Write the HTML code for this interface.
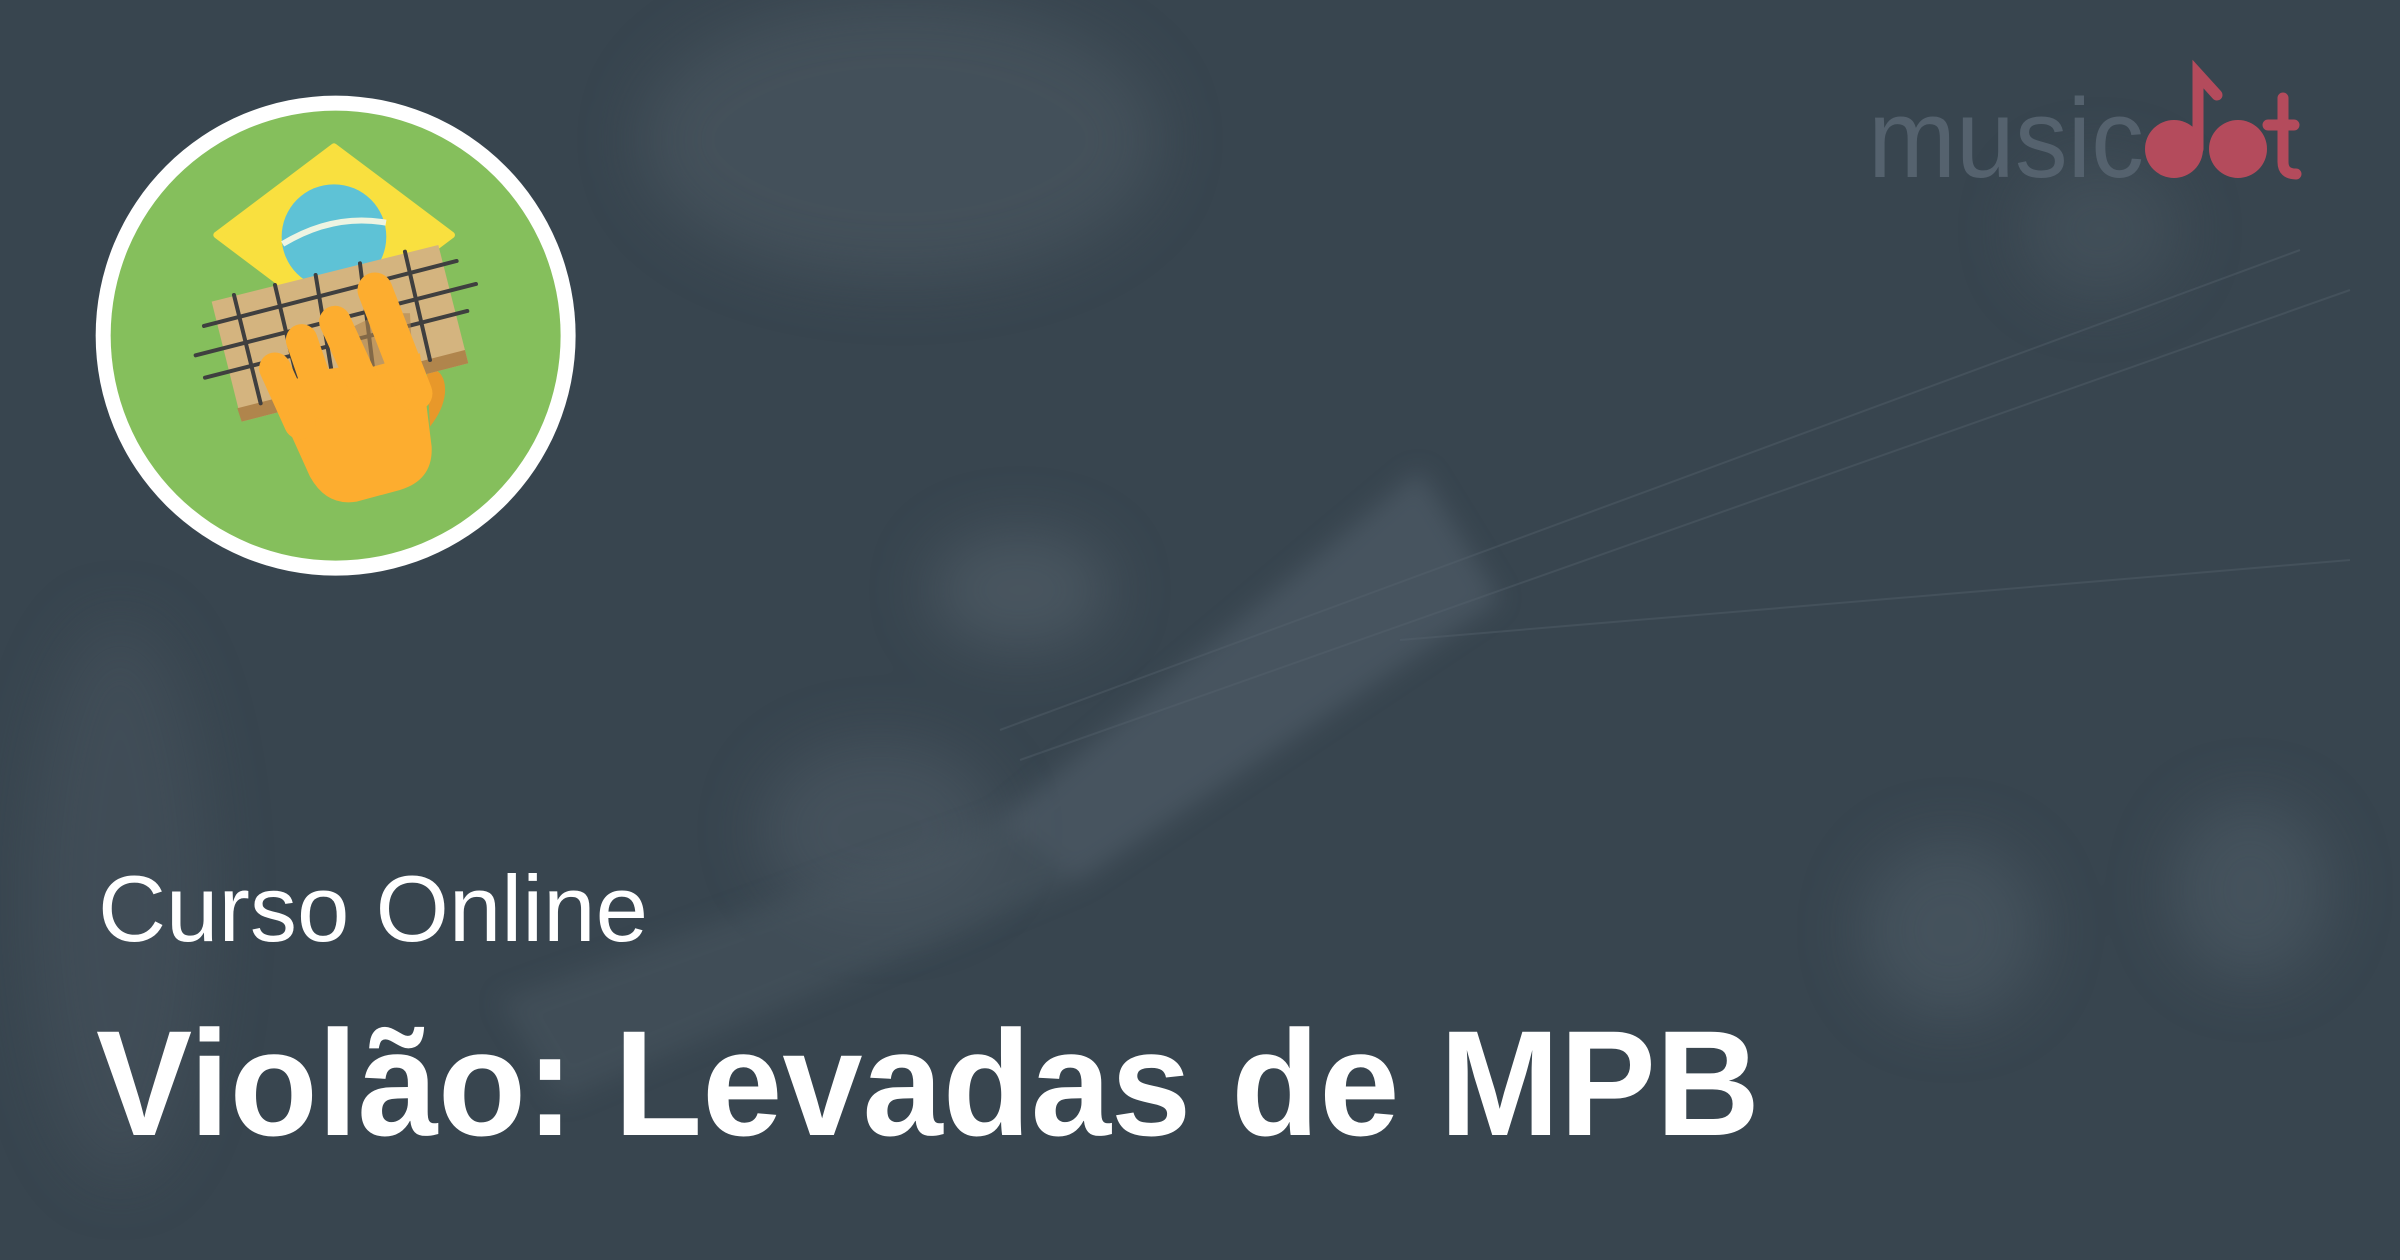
<!DOCTYPE html>
<html><head><meta charset="utf-8"><style>
html,body{margin:0;padding:0;width:2400px;height:1260px;overflow:hidden;background:#38454f}
svg{display:block}
</style></head><body>
<svg width="2400" height="1260" viewBox="0 0 2400 1260" xmlns="http://www.w3.org/2000/svg">
<defs>
<filter id="b" x="-50%" y="-50%" width="200%" height="200%"><feGaussianBlur stdDeviation="30"/></filter>
<filter id="b2" x="-50%" y="-50%" width="200%" height="200%"><feGaussianBlur stdDeviation="12"/></filter>
</defs>
<rect width="2400" height="1260" fill="#38454f"/>
<g filter="url(#b)" opacity="0.55">
<ellipse cx="900" cy="140" rx="260" ry="140" fill="#4d5a64"/>
<ellipse cx="1020" cy="590" rx="90" ry="60" fill="#56636d"/>
<ellipse cx="880" cy="830" rx="120" ry="90" fill="#4f5c66"/>
<ellipse cx="1950" cy="930" rx="90" ry="90" fill="#505d67"/>
<ellipse cx="2250" cy="890" rx="80" ry="90" fill="#505d67"/>
<ellipse cx="120" cy="900" rx="90" ry="280" fill="#46535d"/>
<ellipse cx="2100" cy="230" rx="80" ry="70" fill="#4a5761"/>
</g>
<g filter="url(#b2)" opacity="0.5">
<polygon points="1000,820 1420,470 1500,600 1080,880" fill="#566370"/>
<polygon points="500,1000 1000,820 1080,880 560,1100" fill="#4a5761"/>
</g>
<g stroke="#56636e" stroke-width="2" opacity="0.4">
<line x1="1000" y1="730" x2="2300" y2="250"/>
<line x1="1020" y1="760" x2="2350" y2="290"/>
<line x1="1400" y1="640" x2="2350" y2="560"/>
</g>

<!-- badge -->
<g transform="translate(80,80) scale(0.3333)">
<circle cx="767" cy="767" r="720" fill="#fff"/>
<circle cx="767" cy="767" r="675" fill="#85bf5c"/>
<polygon points="762,200 1115,465 762,730 410,465" fill="#f9e03f" stroke="#f9e03f" stroke-width="20" stroke-linejoin="round"/>
<circle cx="762" cy="470" r="157" fill="#5ec2d6"/>
<path d="M608 492 Q760 400 918 428" stroke="#eef4e2" stroke-width="18" fill="none"/>
<path d="M1040 860 Q1100 870 1095 940 Q1090 990 1050 1040 Z" fill="#e8982a"/>
<polygon points="395,665 1075,495 1165,850 485,1025" fill="#d4b47f"/>
<polygon points="472,985 1155,810 1165,850 485,1025" fill="#b0854c"/>
<g stroke="#3f3f3f" stroke-width="12" stroke-linecap="round">
<line x1="462" y1="645" x2="542" y2="970"/>
<line x1="585" y1="615" x2="658" y2="925"/>
<line x1="707" y1="585" x2="760" y2="905"/>
<line x1="840" y1="550" x2="880" y2="870"/>
<line x1="975" y1="515" x2="1050" y2="840"/>
<line x1="372" y1="738" x2="1130" y2="543"/>
<line x1="347" y1="826" x2="1188" y2="612"/>
<line x1="375" y1="893" x2="1162" y2="693"/>
</g>
<path d="M820 740 L900 700 L990 700 L1000 880 L860 890 Z" fill="#b0854c" opacity="0.6"/>
<g fill="#fdad2f">
<path d="M550 880 L640 900 L720 870 L800 860 L880 860 L1020 820 L1055 1100 Q1060 1200 960 1230 L830 1265 Q740 1280 690 1190 Z"/>
</g>
<g stroke="#fdad2f" stroke-linecap="round">
<line x1="585" y1="865" x2="660" y2="1030" stroke-width="95"/>
<line x1="665" y1="780" x2="730" y2="970" stroke-width="95"/>
<line x1="765" y1="725" x2="850" y2="910" stroke-width="95"/>
<line x1="885" y1="630" x2="1005" y2="940" stroke-width="105"/>
</g>
</g>

<!-- logo -->
<text x="1868" y="177" font-family="Liberation Sans, sans-serif" font-size="112" fill="#55626e" textLength="276" lengthAdjust="spacingAndGlyphs">music</text>
<g fill="#b44b5c">
<circle cx="2174" cy="149" r="29"/>
<circle cx="2238" cy="149" r="29"/>
</g>
<g stroke="#b44b5c" stroke-linecap="round" fill="none" stroke-width="11">
<path d="M2198 149 L2198 74 L2217 95"/>
<path d="M2283 98 L2283 162 Q2283 174 2296 174"/>
<path d="M2268 125 L2294 125"/>
</g>

<text x="98" y="941" font-family="Liberation Sans, sans-serif" font-weight="300" font-size="94" fill="#ffffff" textLength="550" lengthAdjust="spacingAndGlyphs">Curso Online</text>
<text x="96" y="1135" font-family="Liberation Sans, sans-serif" font-weight="bold" font-size="150" fill="#ffffff" textLength="1664" lengthAdjust="spacingAndGlyphs">Violão: Levadas de MPB</text>
</svg>
</body></html>
